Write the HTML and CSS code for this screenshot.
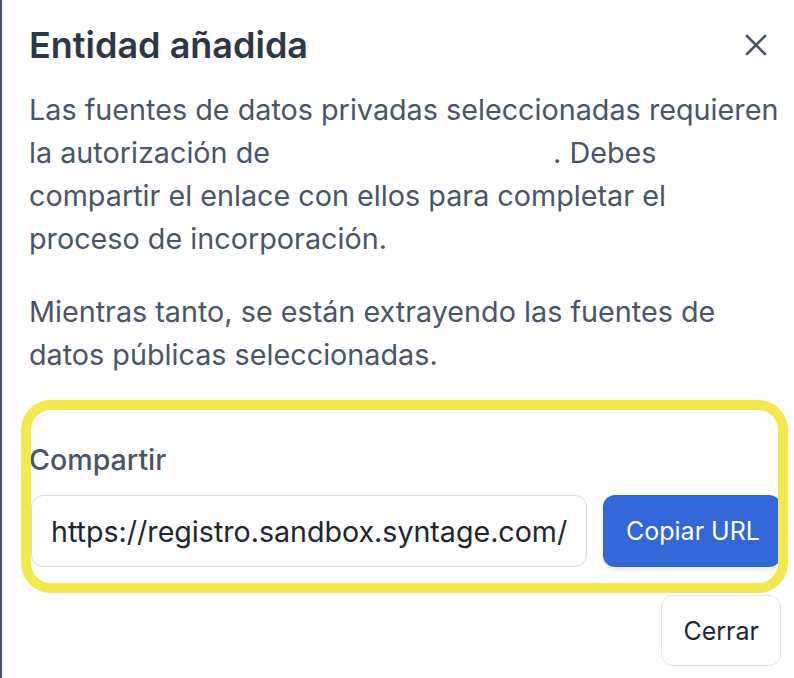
FILE: index.html
```html
<!DOCTYPE html>
<html lang="es">
<head>
<meta charset="utf-8">
<title>Entidad añadida</title>
<link rel="stylesheet" href="styles.css">
</head>
<body>
<div class="modal">
  <header class="modal-header">
    <h2 class="modal-title">Entidad añadida</h2>
    <button class="close-btn" aria-label="Cerrar">
      <svg width="22" height="22" viewBox="0 0 22 22" fill="none" stroke="currentColor" stroke-width="2.6" stroke-linecap="round"><path d="M2 2 L20 20 M20 2 L2 20"/></svg>
    </button>
  </header>
  <div class="modal-body">
    <p class="para">Las fuentes de datos privadas seleccionadas requieren la autorización de&nbsp;&nbsp;&nbsp;&nbsp;&nbsp;&nbsp;&nbsp;&nbsp;&nbsp;&nbsp;&nbsp;&nbsp;&nbsp;&nbsp;&nbsp;&nbsp;&nbsp;&nbsp;&nbsp;&nbsp;&nbsp;&nbsp;&nbsp;&nbsp;&nbsp;&nbsp;&nbsp;&nbsp;&nbsp;&nbsp;&nbsp;&nbsp;&nbsp;&nbsp;&nbsp;. Debes compartir el enlace con ellos para completar el proceso de incorporación.</p>
    <p class="para para-2">Mientras tanto, se están extrayendo las fuentes de datos públicas seleccionadas.</p>
    <div class="share">
      <label class="share-label" for="url">Compartir</label>
      <div class="share-row">
        <input id="url" class="share-input" type="text" value="https://registro.sandbox.syntage.com/onboarding" readonly>
        <button class="btn-primary">Copiar URL</button>
      </div>
      <div class="highlight"></div>
    </div>
  </div>
  <footer class="modal-footer">
    <button class="btn-outline">Cerrar</button>
  </footer>
</div>
</body>
</html>
```
FILE: styles.css
```css
html, body {
  margin: 0;
  padding: 0;
  background: #ffffff;
}
body {
  font-family: Inter, "Noto Sans", sans-serif;
  height: 678px;
  overflow: hidden;
}
.modal {
  border-left: 2px solid #4a5568;
  height: 678px;
  box-sizing: border-box;
  padding: 0 13px 0 29px;
}
.modal-header {
  display: flex;
  align-items: center;
  justify-content: space-between;
  padding-top: 20px;
  height: 50px;
}
.modal-title {
  margin: 0 0 0 -2px;
  font-size: 36px;
  font-weight: 600;
  color: #2d3748;
  line-height: 50px;
}
.close-btn {
  border: 0;
  background: none;
  padding: 0;
  margin-right: 14px;
  color: #4a5568;
  display: flex;
  cursor: pointer;
}
.modal-body {
  margin-top: 18px;
}
.para {
  margin: 0 0 0 -2px;
  font-size: 28.75px;
  line-height: 43px;
  color: #4a5568;
}
.para-2 {
  margin-top: 30px;
}
.share {
  position: relative;
  margin-top: 62px;
}
.share-label {
  display: block;
  margin-left: -2px;
  font-size: 28.6px;
  line-height: 43px;
  font-weight: 500;
  color: #4a5568;
  margin-bottom: 14px;
}
.share-row {
  display: flex;
  gap: 16px;
}
.share-input {
  flex: 0 0 556px;
  box-sizing: border-box;
  height: 72px;
  border: 1px solid #d6dbe4;
  border-radius: 12px;
  padding: 0 19px;
  font-family: Inter, "Noto Sans", sans-serif;
  font-size: 28.6px;
  color: #1f2630;
  background: #fff;
  outline: none;
}
.btn-primary {
  flex: 1;
  height: 72px;
  border: 0;
  border-radius: 12px;
  background: #3366d6;
  color: #ffffff;
  font-family: Inter, "Noto Sans", sans-serif;
  font-size: 25px;
  text-align: left;
  padding: 0 0 0 23px;
  box-shadow: 0 3px 4px rgba(0,0,0,0.08);
}
.highlight {
  position: absolute;
  left: -10px;
  top: -38px;
  right: -7px;
  bottom: -26px;
  border: 10px solid #f3e94e;
  border-radius: 30px;
  pointer-events: none;
}
.modal-footer {
  display: flex;
  justify-content: flex-end;
  margin-top: 28px;
}
.btn-outline {
  height: 71px;
  border: 1px solid #e2e6ec;
  border-radius: 12px;
  background: #fff;
  color: #1f2630;
  font-family: Inter, "Noto Sans", sans-serif;
  font-size: 25px;
  padding: 0 21px;
}
```
